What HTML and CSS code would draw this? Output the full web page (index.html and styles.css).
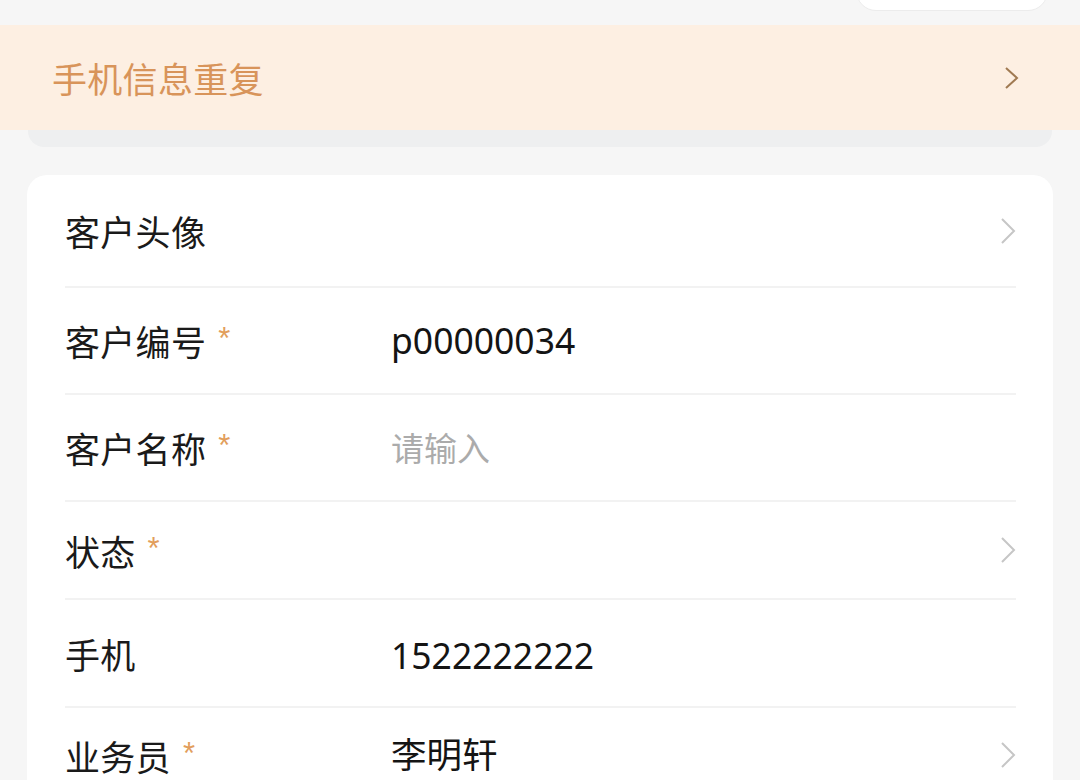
FILE: index.html
```html
<!DOCTYPE html>
<html lang="zh-CN">
<head>
<meta charset="utf-8">
<title>客户信息</title>
<link rel="stylesheet" href="styles.css">
</head>
<body>
<div class="topbar">
  <div class="pill"></div>
</div>
<div class="banner">
  <span class="banner-text">手机信息重复</span>
  <svg class="chev chev-banner" width="16" height="24" viewBox="0 0 16 24"><polyline points="2,2 13,12 2,22" fill="none" stroke="#a07a52" stroke-width="2"/></svg>
</div>
<div class="banner-shadow"></div>
<div class="card">
  <div class="row h113">
    <div class="label">客户头像</div>
    <div class="value"></div>
    <svg class="chev" width="16" height="26" viewBox="0 0 16 26"><polyline points="2,1 14,13 2,25" fill="none" stroke="#c6c6c6" stroke-width="2"/></svg>
  </div>
  <div class="row h107">
    <div class="label">客户编号<span class="req">*</span></div>
    <div class="value">p00000034</div>
  </div>
  <div class="row h107">
    <div class="label">客户名称<span class="req">*</span></div>
    <div class="value placeholder">请输入</div>
  </div>
  <div class="row h98">
    <div class="label">状态<span class="req">*</span></div>
    <div class="value"></div>
    <svg class="chev" width="16" height="26" viewBox="0 0 16 26"><polyline points="2,1 14,13 2,25" fill="none" stroke="#c6c6c6" stroke-width="2"/></svg>
  </div>
  <div class="row h108">
    <div class="label">手机</div>
    <div class="value num">1522222222</div>
  </div>
  <div class="row h94 last">
    <div class="label">业务员<span class="req">*</span></div>
    <div class="value">李明轩</div>
    <svg class="chev" width="16" height="26" viewBox="0 0 16 26"><polyline points="2,1 14,13 2,25" fill="none" stroke="#c6c6c6" stroke-width="2"/></svg>
  </div>
</div>
</body>
</html>
```
FILE: styles.css
```css
html, body {
  margin: 0;
  padding: 0;
}
body {
  background: #f6f6f6;
  font-family: "Noto Sans CJK SC", "Liberation Sans", sans-serif;
  width: 1080px;
  height: 780px;
  overflow: hidden;
}
.topbar {
  height: 25px;
  display: flex;
  justify-content: flex-end;
  padding-right: 32px;
}
.pill {
  width: 190px;
  height: 40px;
  margin-top: -31px;
  background: #ffffff;
  border: 1px solid #ececec;
  border-radius: 20px;
}
.banner {
  height: 105px;
  background: #fdefe2;
  display: flex;
  align-items: center;
  justify-content: space-between;
  padding: 0 60px 0 52px;
}
.banner-text {
  font-size: 35px;
  color: #d8945a;
  line-height: 1;
  letter-spacing: 0.3px;
}
.chev {
  display: block;
  flex: none;
}
.banner-shadow {
  height: 17px;
  margin: 0 28px;
  background: #eeeff0;
  border-radius: 0 0 16px 16px;
}
.card {
  margin: 28px 27px 0;
  background: #ffffff;
  border-radius: 20px;
  padding: 0 37px 0 38px;
}
.row {
  display: flex;
  align-items: center;
  border-bottom: 2px solid #f2f2f2;
  box-sizing: border-box;
}
.row.last {
  border-bottom: none;
}
.h113 { height: 113px; }
.h107 { height: 107px; }
.h98 { height: 98px; }
.h108 { height: 108px; }
.h94 { height: 94px; }
.label {
  width: 326px;
  flex: none;
  font-size: 35px;
  color: #1a1a1a;
  line-height: 1;
  letter-spacing: 0.3px;
}
.req {
  font-family: "Liberation Sans", sans-serif;
  color: #e29e5c;
  font-size: 31px;
  margin-left: 12px;
  vertical-align: 7px;
}
.value {
  flex: 1;
  font-family: "Noto Sans", "Noto Sans CJK SC", sans-serif;
  font-size: 35.5px;
  color: #141414;
  line-height: 1;
}
.value.num {
  padding-top: 6px;
}
.placeholder {
  font-family: "Noto Sans CJK SC", sans-serif;
  font-size: 33px;
  color: #ababab;
}
```
